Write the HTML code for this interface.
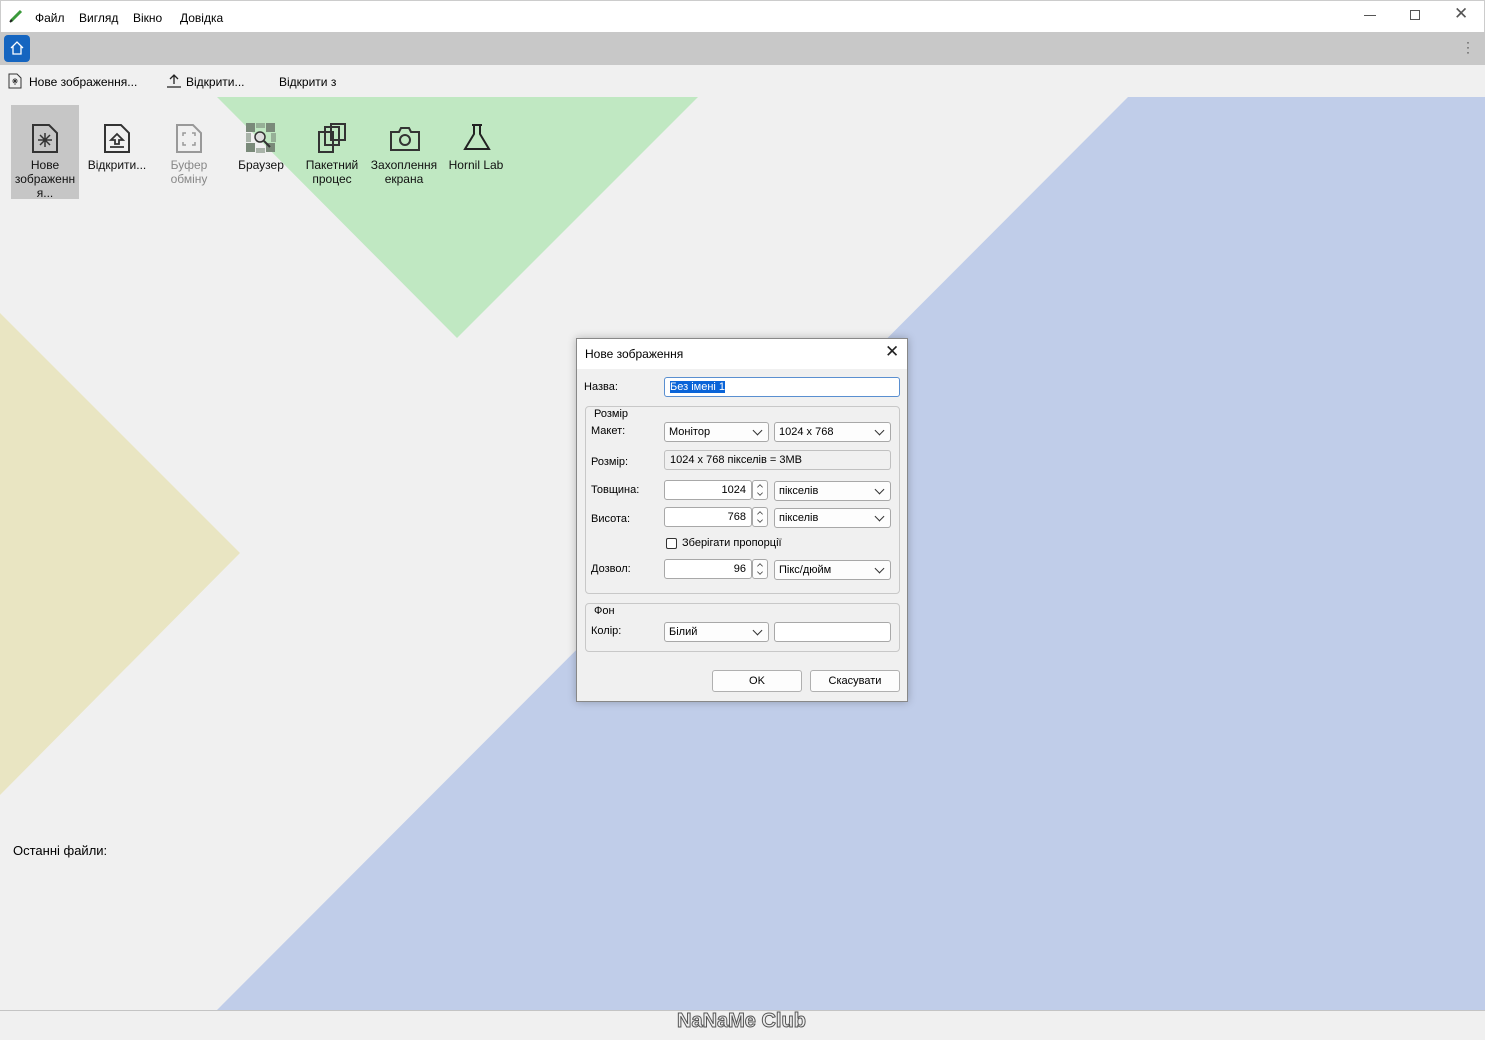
<!DOCTYPE html>
<html><head><meta charset="utf-8"><style>
*{box-sizing:border-box;margin:0;padding:0}
body{width:1485px;height:1040px;overflow:hidden;background:#f0f0f0;font-family:"Liberation Sans","DejaVu Sans",sans-serif;font-size:12px;color:#000;position:relative}
.abs{position:absolute}
.t{position:absolute;white-space:nowrap}
.inp{position:absolute;background:#fff;border:1px solid #a8a8a8;border-radius:3px;height:20px;font-size:11px;line-height:18px;padding:0 5px}
.cb{position:absolute;background:#fdfdfd;border:1px solid #a8a8a8;border-radius:3px;height:20px;font-size:11px;line-height:18px;padding:0 4px}
.cb:after{content:"";position:absolute;right:7px;top:4px;width:6px;height:6px;border-right:1.3px solid #333;border-bottom:1.3px solid #333;transform:rotate(45deg)}
.grp{position:absolute;border:1px solid #c8c8c8;border-radius:4px}
.btn{position:absolute;background:#fdfdfd;border:1px solid #b0b0b0;border-radius:3px;height:22px;text-align:center;line-height:20px;font-size:11px}
.spin{position:absolute;width:16px;height:20px;border:1px solid #a8a8a8;border-radius:3px;background:#fdfdfd}
.ic{position:absolute;text-align:center;font-size:12px;line-height:14px;color:#111}
</style></head><body>
<svg class="abs" style="left:0;top:97px" width="1485" height="913">
<polygon points="217,0 698,0 457,241" fill="#c0e8c2"/>
<polygon points="1128,0 1485,0 1485,913 217,913" fill="#c0cde9"/>
<polygon points="0,216 240,456 0,698" fill="#e9e5c2"/>
</svg>
<div class="abs" style="left:0;top:0;width:1485px;height:32px;background:#fff;border:1px solid #ccc;border-bottom:none"></div>
<svg class="abs" style="left:9px;top:9px" width="14" height="14"><path d="M2 12 L12 2" stroke="#3a9a3a" stroke-width="3"/><path d="M1 13 L3 11" stroke="#222" stroke-width="2"/></svg>
<div class="t" style="left:35px;top:11px;font-size:12px">Файл</div>
<div class="t" style="left:79px;top:11px">Вигляд</div>
<div class="t" style="left:133px;top:11px">Вікно</div>
<div class="t" style="left:180px;top:11px">Довідка</div>
<div class="abs" style="left:1364px;top:15px;width:12px;height:1px;background:#555"></div>
<div class="abs" style="left:1410px;top:10px;width:10px;height:10px;border:1px solid #555"></div>
<div class="t" style="left:1454px;top:4px;font-size:17px;color:#555">&#10005;</div>
<div class="abs" style="left:0;top:32px;width:1485px;height:33px;background:#c8c8c8"></div>
<div class="abs" style="left:4px;top:35px;width:26px;height:27px;background:#1565c0;border-radius:4px"></div>
<svg class="abs" style="left:9px;top:40px" width="16" height="16"><path d="M2 8 L8 2 L14 8 M4 6 V14 H12 V6" fill="none" stroke="#fff" stroke-width="1.3"/></svg>
<div class="t" style="left:1466px;top:40px;font-size:12px;line-height:5px;color:#333">·<br>·<br>·</div>
<svg class="abs" style="left:8px;top:73px" width="14" height="16"><path d="M1 1H9L13 5V15H1Z" fill="none" stroke="#333"/><path d="M7 5V12M4 8H10M5 6L9 10M9 6L5 10" stroke="#333" stroke-width=".8"/></svg>
<div class="t" style="left:29px;top:75px">Нове зображення...</div>
<svg class="abs" style="left:166px;top:74px" width="16" height="14"><path d="M8 1V10M4 5L8 1L12 5M1 13H15" fill="none" stroke="#222" stroke-width="1.3"/></svg>
<div class="t" style="left:186px;top:75px">Відкрити...</div>
<div class="t" style="left:279px;top:75px">Відкрити з</div>
<div class="abs" style="left:11px;top:105px;width:68px;height:94px;background:#c6c6c6"></div>
<svg class="abs" style="left:30px;top:122px" width="30" height="32"><path d="M3 3H19L27 11V30H3Z" fill="none" stroke="#333" stroke-width="2"/><path d="M15 11V25M8 18H22M10 13L20 23M20 13L10 23" stroke="#333" stroke-width="1.5"/></svg>
<div class="ic" style="left:11px;top:158px;width:68px">Нове<br>зображенн<br>я...</div>
<svg class="abs" style="left:102px;top:122px" width="30" height="32"><path d="M3 3H19L27 11V30H3Z" fill="none" stroke="#333" stroke-width="2"/><path d="M15 12L9 18H13V22H17V18H21Z M8 25H22" fill="none" stroke="#333" stroke-width="1.8"/></svg>
<div class="ic" style="left:82px;top:158px;width:70px">Відкрити...</div>
<svg class="abs" style="left:174px;top:122px" width="30" height="32"><path d="M3 3H19L27 11V30H3Z" fill="none" stroke="#999" stroke-width="2"/><path d="M9 14V11H12M18 11H21V14M9 20V23H12M18 23H21V20" fill="none" stroke="#999" stroke-width="1.5"/></svg>
<div class="ic" style="left:154px;top:158px;width:70px;color:#888">Буфер<br>обміну</div>
<svg class="abs" style="left:245px;top:122px" width="32" height="32"><g fill="#7a8a7a"><rect x="1" y="1" width="9" height="9"/><rect x="21" y="1" width="9" height="9"/><rect x="1" y="21" width="9" height="9"/><rect x="21" y="21" width="9" height="9"/><rect x="11" y="1" width="9" height="5" opacity=".6"/><rect x="1" y="11" width="5" height="9" opacity=".6"/><rect x="26" y="11" width="5" height="9" opacity=".6"/><rect x="11" y="26" width="9" height="5" opacity=".6"/></g><circle cx="15" cy="15" r="5" fill="#ddd" stroke="#333" stroke-width="1.5"/><path d="M19 19L25 25" stroke="#333" stroke-width="2"/></svg>
<div class="ic" style="left:226px;top:158px;width:70px">Браузер</div>
<svg class="abs" style="left:316px;top:122px" width="32" height="32"><rect x="3" y="10" width="14" height="20" fill="none" stroke="#333" stroke-width="2"/><rect x="9" y="5" width="14" height="18" fill="none" stroke="#333" stroke-width="2"/><rect x="15" y="2" width="14" height="16" fill="none" stroke="#333" stroke-width="2"/></svg>
<div class="ic" style="left:297px;top:158px;width:70px">Пакетний<br>процес</div>
<svg class="abs" style="left:389px;top:125px" width="32" height="28"><path d="M2 7H10L12 3H20L22 7H30V25H2Z" fill="none" stroke="#333" stroke-width="2"/><circle cx="16" cy="15" r="5" fill="none" stroke="#333" stroke-width="2"/></svg>
<div class="ic" style="left:369px;top:158px;width:70px">Захоплення<br>екрана</div>
<svg class="abs" style="left:462px;top:123px" width="30" height="30"><path d="M10 2H20M12 2V11L3 26H27L18 11V2" fill="none" stroke="#222" stroke-width="2"/></svg>
<div class="ic" style="left:441px;top:158px;width:70px">Hornil Lab</div>
<div class="t" style="left:13px;top:843px;font-size:13px">Останні файли:</div>
<div class="abs" style="left:0;top:1010px;width:1485px;height:30px;background:#f0f0f0;border-top:1px solid #c4c4c4"></div>
<div class="t" style="left:677px;top:1010px;font-size:20px;font-weight:bold;color:#eee;-webkit-text-stroke:1px #555">NaNaMe Club</div>
<div class="abs" style="left:576px;top:338px;width:332px;height:364px;background:#f0f0f0;border:1px solid #888;box-shadow:0 0 8px rgba(0,0,0,.25)"></div>
<div class="abs" style="left:577px;top:339px;width:330px;height:30px;background:#fff"></div>
<div class="t" style="left:585px;top:347px">Нове зображення</div>
<div class="t" style="left:885px;top:342px;font-size:17px;color:#222">&#10005;</div>
<div class="t" style="left:584px;top:381px;font-size:11px">Назва:</div>
<div class="inp" style="left:664px;top:377px;width:236px;border:1px solid #5a8fd0"><span style="background:#0a64d8;color:#fff">Без імені 1</span></div>
<div class="grp" style="left:585px;top:406px;width:315px;height:188px"></div>
<div class="t" style="left:594px;top:408px;font-size:11px">Розмір</div>
<div class="t" style="left:591px;top:425px;font-size:11px">Макет:</div>
<div class="cb" style="left:664px;top:422px;width:105px">Монітор</div>
<div class="cb" style="left:774px;top:422px;width:117px">1024 x 768</div>
<div class="t" style="left:591px;top:456px;font-size:11px">Розмір:</div>
<div class="inp" style="left:664px;top:450px;width:227px;background:#f0f0f0;border-color:#c0c0c0">1024 x 768 пікселів = 3MB</div>
<div class="t" style="left:591px;top:484px;font-size:11px">Товщина:</div>
<div class="inp" style="left:664px;top:480px;width:88px;text-align:right">1024</div>
<svg class="spin" style="left:752px;top:480px" viewBox="0 0 16 20"><path d="M5 7L8 4L11 7M5 13L8 16L11 13" fill="none" stroke="#444"/></svg>
<div class="cb" style="left:774px;top:481px;width:117px">пікселів</div>
<div class="t" style="left:591px;top:513px;font-size:11px">Висота:</div>
<div class="inp" style="left:664px;top:507px;width:88px;text-align:right">768</div>
<svg class="spin" style="left:752px;top:507px" viewBox="0 0 16 20"><path d="M5 7L8 4L11 7M5 13L8 16L11 13" fill="none" stroke="#444"/></svg>
<div class="cb" style="left:774px;top:508px;width:117px">пікселів</div>
<div class="abs" style="left:666px;top:538px;width:11px;height:11px;border:1px solid #333;border-radius:2px;background:#fff"></div>
<div class="t" style="left:682px;top:537px;font-size:11px">Зберігати пропорції</div>
<div class="t" style="left:591px;top:563px;font-size:11px">Дозвол:</div>
<div class="inp" style="left:664px;top:559px;width:88px;text-align:right">96</div>
<svg class="spin" style="left:752px;top:559px" viewBox="0 0 16 20"><path d="M5 7L8 4L11 7M5 13L8 16L11 13" fill="none" stroke="#444"/></svg>
<div class="cb" style="left:774px;top:560px;width:117px">Пікс/дюйм</div>
<div class="grp" style="left:585px;top:603px;width:315px;height:49px"></div>
<div class="t" style="left:594px;top:605px;font-size:11px">Фон</div>
<div class="t" style="left:591px;top:625px;font-size:11px">Колір:</div>
<div class="cb" style="left:664px;top:622px;width:105px">Білий</div>
<div class="inp" style="left:774px;top:622px;width:117px"></div>
<div class="btn" style="left:712px;top:670px;width:90px">OK</div>
<div class="btn" style="left:810px;top:670px;width:90px">Скасувати</div>
</body></html>
